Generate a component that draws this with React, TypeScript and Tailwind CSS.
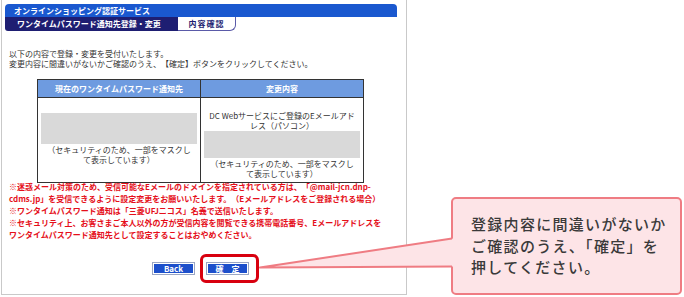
const NOTES = [
  '※迷惑メール対策のため、受信可能なEメールのドメインを指定されている方は、「@mail-jcn.dnp-',
  'cdms.jp」を受信できるように設定変更をお願いいたします。（Eメールアドレスをご登録される場合）',
  '※ワンタイムパスワード通知は「三菱UFJニコス」名義で送信いたします。',
  '※セキュリティ上、お客さまご本人以外の方が受信内容を閲覧できる携帯電話番号、Eメールアドレスを',
  'ワンタイムパスワード通知先として設定することはおやめください。',
]

function Header() {
  return (
    <div className="mt-[4px] ml-[3px] w-[392px]">
      <div className="h-[13px] rounded-t-[4px] bg-[#1a58cf] pl-[9px] text-[8px] leading-[13px] font-bold text-white">
        オンラインショッピング認証サービス
      </div>
      <div className="flex h-[14px]">
        <div className="w-[173px] rounded-bl-[3px] bg-[#1e1e72] pl-[12px] text-[8px] leading-[14px] font-bold text-white">
          ワンタイムパスワード通知先登録・変更
        </div>
        <div className="w-[58px] rounded-br-[6px] border-r border-b border-[#5a5aa8] bg-white text-center text-[8px] leading-[13px] font-bold tracking-[1px] text-[#1e1e72]">
          内容確認
        </div>
      </div>
    </div>
  )
}

function ConfirmTable() {
  return (
    <table className="mt-[10px] ml-[35px] w-[327px] table-fixed border-collapse text-[8px] leading-[10px]">
      <thead>
        <tr>
          <th className="h-[18px] border border-[#333] bg-[#6e9be0] p-0 font-bold text-white">
            現在のワンタイムパスワード通知先
          </th>
          <th className="h-[18px] border border-[#333] bg-[#6e9be0] p-0 font-bold text-white">変更内容</th>
        </tr>
      </thead>
      <tbody>
        <tr>
          <td className="h-[85px] border border-[#333] px-[3px] pt-[15px] align-top text-center">
            <div className="h-[31px] w-full bg-[#d9d9d9]" />
            <div className="mt-[1px]">
              （セキュリティのため、一部をマスクし
              <br />
              て表示しています）
            </div>
          </td>
          <td className="h-[85px] border border-[#333] px-[3px] pt-[13px] align-top text-center">
            <div>
              DC Webサービスにご登録のEメールアド
              <br />
              レス（パソコン）
            </div>
            <div className="h-[27px] w-full bg-[#d9d9d9]" />
            <div className="mt-[1px]">
              （セキュリティのため、一部をマスクし
              <br />
              て表示しています）
            </div>
          </td>
        </tr>
      </tbody>
    </table>
  )
}

function FormButton({ label }: { label: string }) {
  return (
    <div className="h-[13px] w-[43px] border border-[#9aa6c4] bg-[#1c4fcb] text-center text-[8px] leading-[11px] font-bold text-white shadow-[inset_0_0_0_1px_#ffffff]">
      {label}
    </div>
  )
}

function ConfirmFrame() {
  return (
    <div className="ml-[1px] h-[295px] w-[406px] shrink-0 border-x border-b border-[#c9c9c9]">
      <Header />
      <div className="mt-[18px] pl-[7px] text-[8px] leading-[10px] text-[#333] [text-spacing-trim:space-all]">
        以下の内容で登録・変更を受付いたします。
        <br />
        変更内容に間違いがないかご確認のうえ、【確定】ボタンをクリックしてください。
      </div>
      <ConfirmTable />
      <div className="-mt-[2px] pl-[7px] text-[8px] leading-[12px] font-bold whitespace-nowrap text-[#e50f1a]">
        {NOTES.map((line) => (
          <div key={line}>{line}</div>
        ))}
      </div>
      <div className="mt-[21px] ml-[150px] flex gap-[11px]">
        <FormButton label="Back" />
        <FormButton label="確　定" />
      </div>
    </div>
  )
}

function Callout() {
  return (
    <div className="mt-[197px] ml-[44px] h-[98px] w-[231px] shrink-0 rounded-[5px] border-2 border-[#ef7c83] bg-[#fde4e7] pt-[14px] pl-[18px] text-[15px] leading-[21.5px] font-medium tracking-[1.3px] text-[#3a3a3a]">
      <div>登録内容に間違いがないか</div>
      <div>ご確認のうえ、「確定」を</div>
      <div>押してください。</div>
    </div>
  )
}

export default function App() {
  return (
    <div className="relative flex h-[297px] w-[684px] items-start overflow-hidden bg-white font-['Noto_Sans_CJK_JP',sans-serif] text-[#333]">
      <ConfirmFrame />
      <Callout />
      {/* callout pointer + highlight ring sit over the form */}
      <svg className="pointer-events-none absolute top-0 left-0" width="684" height="297">
        <polygon points="453.5,238.5 260,267.5 453.5,266.5" fill="#fde4e7" />
        <polyline
          points="452,238.5 260,267.5 452,266.5"
          fill="none"
          stroke="#ef7c83"
          strokeWidth="2"
          strokeLinejoin="round"
        />
      </svg>
      <div className="absolute top-[254px] left-[200px] h-[29px] w-[59px] rounded-[6px] border-[3px] border-[#d8000f]" />
    </div>
  )
}
